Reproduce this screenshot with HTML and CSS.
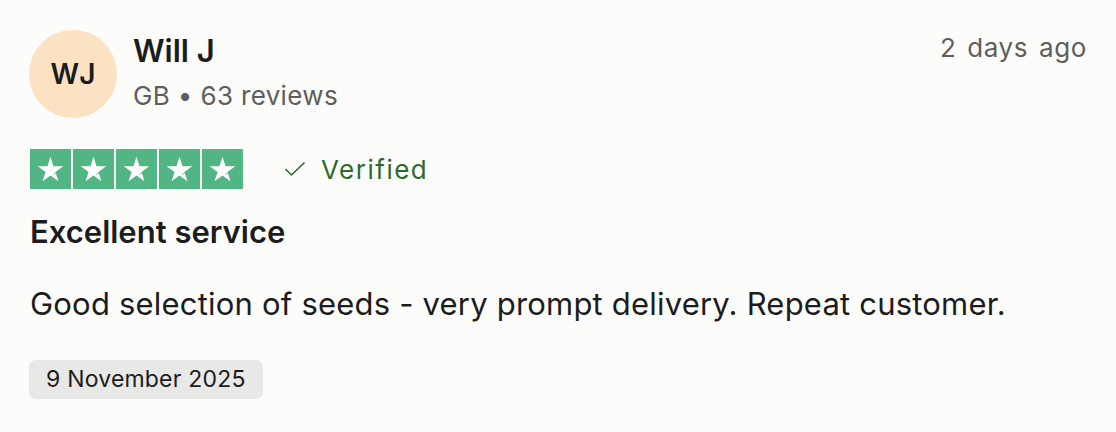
FILE: index.html
```html
<!DOCTYPE html>
<html lang="en">
<head>
  <meta charset="UTF-8" />
  <meta name="viewport" content="width=device-width, initial-scale=1.0"/>
  <title>Review</title>
  <link rel="stylesheet" href="styles.css">
</head>
<body>
  <div class="review">
    <!-- header -->
    <div class="review-head">
      <div class="avatar">WJ</div>
      <div class="author">
        <div class="author-name">Will J</div>
        <div class="author-meta">GB • 63 reviews</div>
      </div>
      <div class="posted">2 days ago</div>
    </div>

    <!-- rating -->
    <div class="rating-row">
      <div class="stars">
        <svg class="star" viewBox="0 0 41 40"><rect width="41" height="40" fill="#52b584"/><polygon fill="#fff" points="20.5,7.8 23.53,17.13 33.34,17.13 25.41,22.89 28.44,32.22 20.5,26.46 12.56,32.22 15.59,22.89 7.66,17.13 17.47,17.13"/><path d="M23.2 25.6 L26.6 23.2" stroke="#52b584" stroke-width="0.8"/></svg>
        <svg class="star" viewBox="0 0 41 40"><rect width="41" height="40" fill="#52b584"/><polygon fill="#fff" points="20.5,7.8 23.53,17.13 33.34,17.13 25.41,22.89 28.44,32.22 20.5,26.46 12.56,32.22 15.59,22.89 7.66,17.13 17.47,17.13"/><path d="M23.2 25.6 L26.6 23.2" stroke="#52b584" stroke-width="0.8"/></svg>
        <svg class="star" viewBox="0 0 41 40"><rect width="41" height="40" fill="#52b584"/><polygon fill="#fff" points="20.5,7.8 23.53,17.13 33.34,17.13 25.41,22.89 28.44,32.22 20.5,26.46 12.56,32.22 15.59,22.89 7.66,17.13 17.47,17.13"/><path d="M23.2 25.6 L26.6 23.2" stroke="#52b584" stroke-width="0.8"/></svg>
        <svg class="star" viewBox="0 0 41 40"><rect width="41" height="40" fill="#52b584"/><polygon fill="#fff" points="20.5,7.8 23.53,17.13 33.34,17.13 25.41,22.89 28.44,32.22 20.5,26.46 12.56,32.22 15.59,22.89 7.66,17.13 17.47,17.13"/><path d="M23.2 25.6 L26.6 23.2" stroke="#52b584" stroke-width="0.8"/></svg>
        <svg class="star" viewBox="0 0 41 40"><rect width="41" height="40" fill="#52b584"/><polygon fill="#fff" points="20.5,7.8 23.53,17.13 33.34,17.13 25.41,22.89 28.44,32.22 20.5,26.46 12.56,32.22 15.59,22.89 7.66,17.13 17.47,17.13"/><path d="M23.2 25.6 L26.6 23.2" stroke="#52b584" stroke-width="0.8"/></svg>
      </div>
      <div class="verified">
        <svg class="check" viewBox="0 0 22 16"><polyline points="1.5,8 7.5,14 20.5,1.5" fill="none" stroke="#2d6a2e" stroke-width="1.6"/></svg>
        <span>Verified</span>
      </div>
    </div>

    <h2 class="review-title">Excellent service</h2>
    <p class="review-text">Good selection of seeds - very prompt delivery. Repeat customer.</p>
    <div class="review-date">9 November 2025</div>
  </div>
</body>
</html>
```

FILE: styles.css
```css
body {
  margin: 0;
  background: #fcfcfb;
  font-family: Inter, "Noto Sans", sans-serif;
  color: #1c1c1c;
}
.review {
  padding: 30px 29px 0 30px;
}
.review-head {
  display: flex;
  align-items: flex-start;
}
.avatar {
  width: 88px;
  height: 88px;
  border-radius: 50%;
  background: #fbe2c2;
  display: flex;
  align-items: center;
  justify-content: center;
  font-size: 28px;
  font-weight: 600;
  letter-spacing: 2px;
  text-indent: 2px;
  margin-left: -1px;
  flex-shrink: 0;
}
.author {
  margin-left: 16px;
  flex: 1;
}
.author-name {
  font-size: 31px;
  font-weight: 600;
  line-height: 36px;
  margin-top: 3px;
}
.author-meta {
  font-size: 26px;
  color: #5f5e5a;
  line-height: 36px;
  letter-spacing: 0.35px;
  margin-top: 9px;
}
.posted {
  font-size: 26px;
  color: #5f5e5a;
  line-height: 36px;
  letter-spacing: 0.6px;
  word-spacing: 3px;
}
.rating-row {
  display: flex;
  align-items: center;
  margin-top: 31px;
}
.stars {
  display: flex;
  gap: 2px;
}
.star {
  width: 41px;
  height: 40px;
  display: block;
}
.verified {
  display: flex;
  align-items: center;
  margin-left: 41px;
  color: #2d6a2e;
  font-size: 26px;
  letter-spacing: 1.5px;
}
.check {
  width: 22px;
  height: 16px;
  margin-right: 15px;
}
.review-title {
  margin: 23px 0 0;
  font-size: 31px;
  font-weight: 600;
  line-height: 40px;
}
.review-text {
  margin: 32px 0 0;
  font-size: 31px;
  line-height: 40px;
  letter-spacing: 0.2px;
}
.review-date {
  width: fit-content;
  margin-top: 36px;
  margin-left: -1px;
  padding: 0 17px;
  background: #e8e8e6;
  border-radius: 7px;
  font-size: 23px;
  line-height: 39px;
  letter-spacing: 0.2px;
}
```
